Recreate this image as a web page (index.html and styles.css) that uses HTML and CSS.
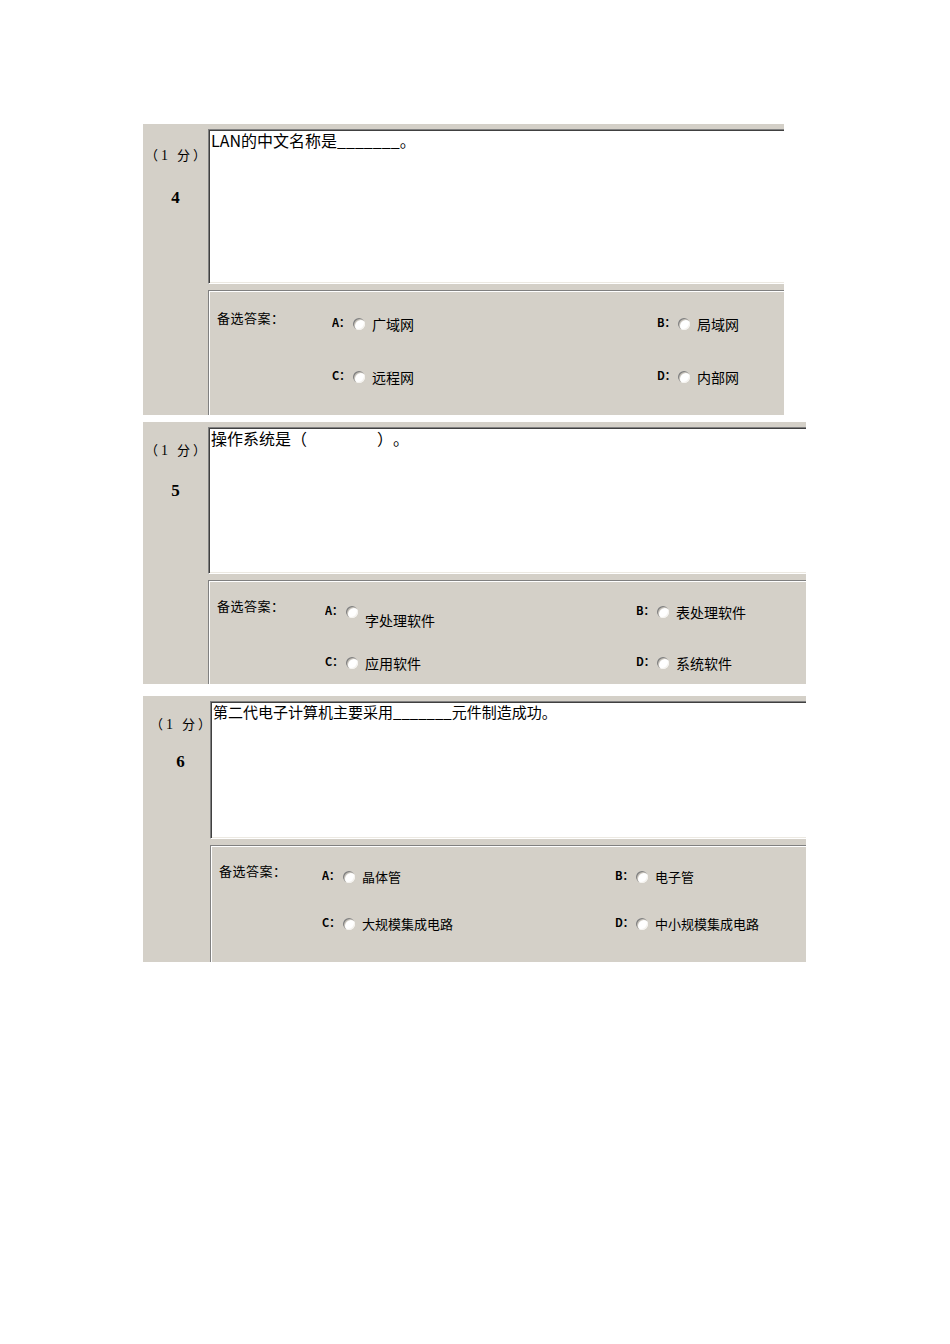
FILE: index.html
```html
<!DOCTYPE html>
<html lang="zh-CN">
<head>
<meta charset="utf-8">
<title>试题</title>
<link rel="stylesheet" href="styles.css">
</head>
<body>
<div class="page">
  <section class="q q4">
    <div class="side"><div class="score">（<span class="pt">1</span> 分）</div><div class="num">4</div></div>
    <div class="main">
      <div class="stem">LAN的中文名称是_______。</div>
      <div class="answers">
        <div class="ans-label">备选答案：</div>
        <div class="opts">
          <div class="opt"><span class="key">A：</span><span class="radio"></span><span class="txt">广域网</span></div>
          <div class="opt"><span class="key">B：</span><span class="radio"></span><span class="txt">局域网</span></div>
          <div class="opt"><span class="key">C：</span><span class="radio"></span><span class="txt">远程网</span></div>
          <div class="opt"><span class="key">D：</span><span class="radio"></span><span class="txt">内部网</span></div>
        </div>
      </div>
    </div>
  </section>
  <section class="q q5">
    <div class="side"><div class="score">（<span class="pt">1</span> 分）</div><div class="num">5</div></div>
    <div class="main">
      <div class="stem">操作系统是（<span class="gap"></span>）。</div>
      <div class="answers">
        <div class="ans-label">备选答案：</div>
        <div class="opts">
          <div class="opt"><span class="key">A：</span><span class="radio"></span><span class="txt low">字处理软件</span></div>
          <div class="opt"><span class="key">B：</span><span class="radio"></span><span class="txt">表处理软件</span></div>
          <div class="opt"><span class="key">C：</span><span class="radio"></span><span class="txt">应用软件</span></div>
          <div class="opt"><span class="key">D：</span><span class="radio"></span><span class="txt">系统软件</span></div>
        </div>
      </div>
    </div>
  </section>
  <section class="q q6">
    <div class="side"><div class="score">（<span class="pt">1</span> 分）</div><div class="num">6</div></div>
    <div class="main">
      <div class="stem">第二代电子计算机主要采用_______元件制造成功。</div>
      <div class="answers">
        <div class="ans-label">备选答案：</div>
        <div class="opts">
          <div class="opt"><span class="key">A：</span><span class="radio"></span><span class="txt">晶体管</span></div>
          <div class="opt"><span class="key">B：</span><span class="radio"></span><span class="txt">电子管</span></div>
          <div class="opt"><span class="key">C：</span><span class="radio"></span><span class="txt">大规模集成电路</span></div>
          <div class="opt"><span class="key">D：</span><span class="radio"></span><span class="txt">中小规模集成电路</span></div>
        </div>
      </div>
    </div>
  </section>
</div>
</body>
</html>
```
FILE: styles.css
```css
body {
  margin: 0;
  background: #fff;
  color: #000;
  font-family: "Noto Sans CJK SC", sans-serif;
  text-spacing-trim: space-all;
}
.page {
  display: flex;
  flex-direction: column;
  align-items: flex-start;
  padding: 124px 0 0 143px;
}
.q {
  display: flex;
  background: #d4d0c8;
}
.q4 { width: 641px; height: 291px; }
.q5 { width: 663px; height: 262px; margin-top: 7px; }
.q6 { width: 663px; height: 266px; margin-top: 12px; }

.side {
  width: 65px;
  flex: none;
  display: flex;
  flex-direction: column;
  align-items: center;
  padding-top: 22px;
  box-sizing: border-box;
}
.q5 .side { padding-top: 19px; }
.q6 .side { width: 67px; padding-top: 19px; padding-left: 8px; }
.score {
  font-family: "Noto Sans CJK SC", sans-serif;
  font-size: 13px;
  line-height: 18px;
  white-space: nowrap;
  letter-spacing: 3px;
  margin-right: -3px;
}
.pt {
  font-family: "Liberation Serif", serif;
  font-size: 14px;
}
.num {
  font-family: "Liberation Serif", serif;
  font-weight: bold;
  font-size: 17px;
  line-height: 20px;
  margin-top: 23px;
}
.q5 .num { margin-top: 21px; }
.q6 .num { margin-top: 18px; }

.main {
  flex: 1;
  min-width: 0;
  display: flex;
  flex-direction: column;
  padding-top: 5px;
}
.stem {
  flex: none;
  box-sizing: border-box;
  background: #fff;
  border-top: 1px solid #808080;
  border-left: 1px solid #808080;
  border-bottom: 1px solid #fff;
  box-shadow: inset 1px 1px 0 #404040, inset 0 -1px 0 #ece9e2;
  padding: 1px 0 0 2px;
  font-size: 16px;
  line-height: 18px;
  white-space: nowrap;
}
.q4 .stem { height: 155px; }
.q5 .stem { height: 147px; }
.q6 .stem { height: 138px; font-size: 15px; }
.gap {
  display: inline-block;
  width: 70px;
}

.answers {
  flex: 1;
  margin-top: 6px;
  display: flex;
  align-items: flex-start;
  border-top: 1px solid #808080;
  border-left: 1px solid #808080;
  box-shadow: inset 1px 1px 0 #fff;
  padding: 17px 0 0 8px;
  box-sizing: border-box;
}
.q5 .answers, .q6 .answers { padding-top: 15px; }
.ans-label {
  flex: none;
  width: 115px;
  font-size: 13px;
  line-height: 20px;
  letter-spacing: 0.5px;
}
.q5 .ans-label { width: 108px; }
.q6 .ans-label { width: 103px; }

.opts {
  display: grid;
  grid-template-columns: 325px auto;
  row-gap: 33px;
  margin-top: 6px;
}
.q5 .opts { grid-template-columns: 311px auto; row-gap: 31px; }
.q6 .opts { grid-template-columns: 293px auto; row-gap: 27px; }

.opt {
  display: flex;
  align-items: flex-start;
  height: 20px;
  white-space: nowrap;
}
.key {
  font-family: "Noto Sans CJK SC", sans-serif;
  font-size: 11px;
  font-weight: bold;
  line-height: 16px;
  width: 21px;
  flex: none;
  overflow: hidden;
}
.radio {
  flex: none;
  width: 12px;
  height: 12px;
  margin-top: 4px;
  border-radius: 50%;
  background: #fff;
  box-sizing: border-box;
  box-shadow: inset 1px 1px 0 #808080, inset 2px 2px 0 #c8c4bc, inset -1px -1px 0 #f4f2ee;
  margin-right: 7px;
}
.txt {
  font-size: 14px;
  line-height: 20px;
}
.q6 .txt { font-size: 13px; }
.txt.low { margin-top: 8px; }
```
